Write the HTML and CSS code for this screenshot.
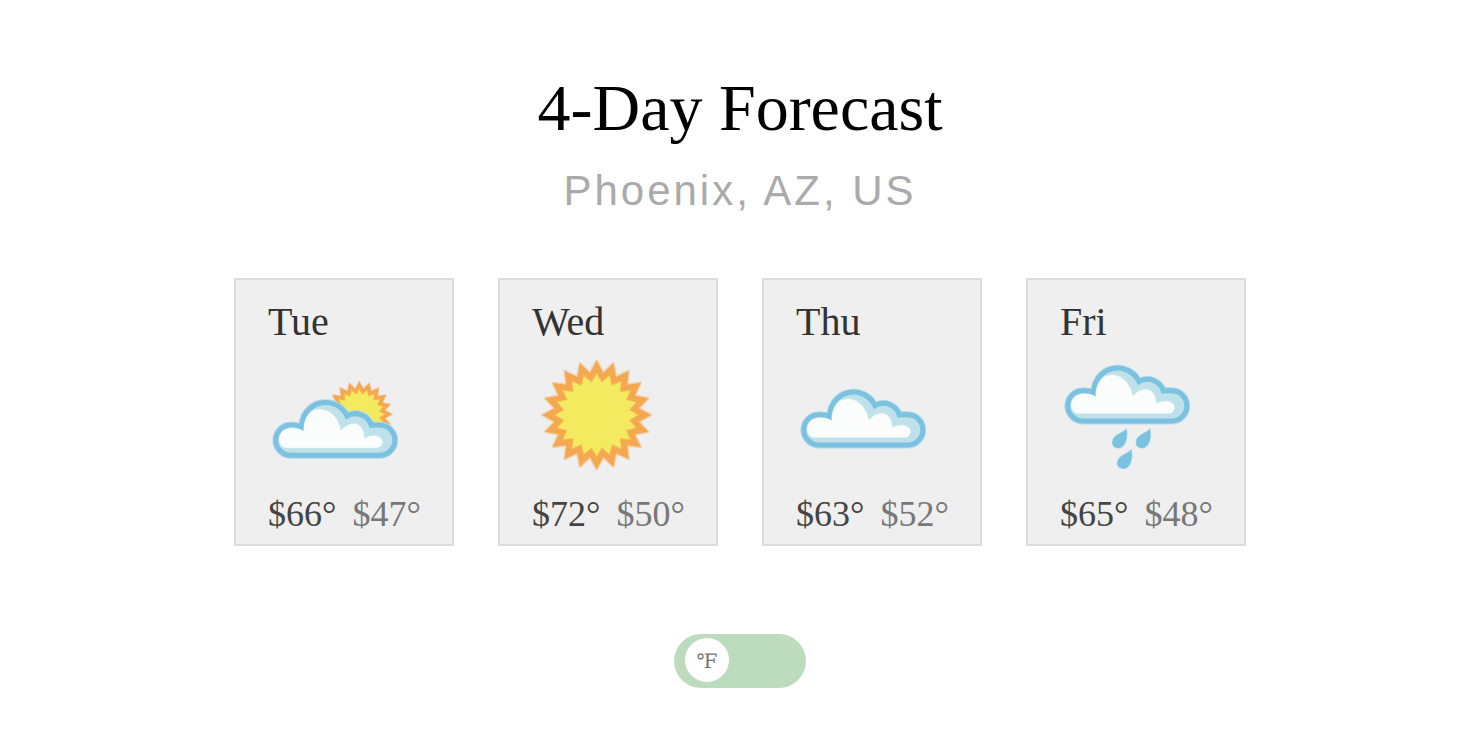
FILE: index.html
```html
<!DOCTYPE html>
<html lang="en">
<head>
<meta charset="utf-8">
<meta name="viewport" content="width=device-width, initial-scale=1">
<title>4-Day Forecast</title>
<link rel="stylesheet" href="styles.css">
</head>
<body>
<svg class="sprite" aria-hidden="true">
  <defs>
    <g id="sun">
      <polygon class="sun-rays" points="0,-163 20,-126 50,-155 58,-114 96,-132 91,-91 132,-96 114,-58 155,-50 126,-20 163,0 126,20 155,50 114,58 132,96 91,91 96,132 58,114 50,155 20,126 0,163 -20,126 -50,155 -58,114 -96,132 -91,91 -132,96 -114,58 -155,50 -126,20 -163,0 -126,-20 -155,-50 -114,-58 -132,-96 -91,-91 -96,-132 -58,-114 -50,-155 -20,-126"/>
      <polygon class="sun-core" points="0,-122 15,-97 38,-116 45,-87 72,-99 69,-69 99,-72 87,-45 116,-38 97,-15 122,0 97,15 116,38 87,45 99,72 69,69 72,99 45,87 38,116 15,97 0,122 -15,97 -38,116 -45,87 -72,99 -69,69 -99,72 -87,45 -116,38 -97,15 -122,0 -97,-15 -116,-38 -87,-45 -99,-72 -69,-69 -72,-99 -45,-87 -38,-116 -15,-97"/>
    </g>
    <path id="cloud-shape" d="M183 525A45 45 0 0 1 183 434Q202 433 216 442A71 71 0 0 1 351 407A50 50 0 0 1 424 435Q436 433 449 434A45 45 0 0 1 449 525Z"/>
    <g id="cloud">
      <use href="#cloud-shape" class="cloud-halo"/>
      <use href="#cloud-shape" class="cloud-body"/>
      <path class="cloud-light" d="M168 502C142 498 144 462 162 450C180 440 206 442 222 453C220 420 236 387 270 387C304 390 326 416 332 452Q350 430 375 430Q402 436 402 475Q415 466 435 466Q457 470 457 485Q455 502 438 502Z"/>
    </g>
    <path id="drop" class="drop" d="M313 477C302 491 271 494 271 518C272 531 282 534 291 534C309 532 318 506 313 477Z"/>
  </defs>
</svg>
<main class="page">
  <h1 class="title">4-Day Forecast</h1>
  <p class="place">Phoenix, AZ, US</p>
  <section class="days" aria-label="Forecast">
    <article class="day">
      <h2 class="day-name">Tue</h2>
      <svg class="day-icon" viewBox="114 240 390 390" role="img" aria-label="Partly cloudy">
        <use href="#sun" transform="translate(388 433) scale(.605)"/>
        <use href="#cloud" transform="translate(0 31)"/>
      </svg>
      <p class="temps"><span class="high">$66°</span><span class="low">$47°</span></p>
    </article>
    <article class="day">
      <h2 class="day-name">Wed</h2>
      <svg class="day-icon" viewBox="114 240 390 390" role="img" aria-label="Sunny">
        <use href="#sun" transform="translate(308 435)"/>
      </svg>
      <p class="temps"><span class="high">$72°</span><span class="low">$50°</span></p>
    </article>
    <article class="day">
      <h2 class="day-name">Thu</h2>
      <svg class="day-icon" viewBox="114 240 390 390" role="img" aria-label="Cloudy">
        <use href="#cloud"/>
      </svg>
      <p class="temps"><span class="high">$63°</span><span class="low">$52°</span></p>
    </article>
    <article class="day">
      <h2 class="day-name">Fri</h2>
      <svg class="day-icon" viewBox="114 240 390 390" role="img" aria-label="Rain">
        <use href="#cloud" transform="translate(0 -72)"/>
        <use href="#drop"/>
        <use href="#drop" transform="translate(71 0)"/>
        <use href="#drop" transform="translate(15 62)"/>
      </svg>
      <p class="temps"><span class="high">$65°</span><span class="low">$48°</span></p>
    </article>
  </section>
  <label class="toggle">
    <input class="toggle-input" type="checkbox" role="switch" aria-label="Show degrees Celsius">
    <span class="toggle-knob">℉</span>
  </label>
</main>
</body>
</html>
```
FILE: styles.css
```css
* {
  box-sizing: border-box;
}

body {
  margin: 0;
  background: #fff;
  color: #000;
  font-family: "Liberation Serif", "Times New Roman", serif;
}

.sprite {
  display: block;
  width: 0;
  height: 0;
}

.page {
  display: flex;
  flex-direction: column;
  align-items: center;
  padding: 68px 4px 40px 0;
}

.title {
  margin: 0;
  font-size: 66px;
  font-weight: 400;
  line-height: 80px;
}

.place {
  margin: 17px 0 0;
  color: #aaa;
  font-family: "Liberation Sans Narrow", "Arial Narrow", "Liberation Sans", sans-serif;
  font-size: 42px;
  line-height: 52px;
  letter-spacing: 3px;
}

.days {
  display: flex;
  flex-wrap: wrap;
  justify-content: center;
  gap: 44px;
  margin-top: 61px;
}

.day {
  min-width: 220px;
  padding: 20px 28px 8px 32px;
  border: 2px solid #dcdcdc;
  background: #efefef;
}

.day-name {
  margin: 0;
  color: #333;
  font-size: 40px;
  font-weight: 400;
  line-height: 44px;
}

.day-icon {
  display: block;
  width: 130px;
  height: 130px;
  margin: 6px 0 12px;
}

.temps {
  display: flex;
  gap: 16px;
  margin: 0;
  font-size: 36px;
  line-height: 44px;
}

.high {
  color: #444;
}

.low {
  color: #777;
}

.sun-rays {
  fill: #f4a850;
  stroke: #f4a850;
  stroke-opacity: .4;
  stroke-width: 8;
  stroke-linejoin: round;
}

.sun-core {
  fill: #f4ea60;
  stroke: #f4ea60;
  stroke-opacity: .4;
  stroke-width: 6;
}

.cloud-halo {
  fill: none;
  stroke: #b4dcea;
  stroke-width: 21;
}

.cloud-body {
  fill: #bfe2ea;
  stroke: #7ac2e0;
  stroke-width: 15;
}

.cloud-light {
  fill: #fbfdfd;
  stroke: #fbfdfd;
  stroke-opacity: .4;
  stroke-width: 4;
}

.drop {
  fill: #7ac2e0;
  stroke: #7ac2e0;
  stroke-opacity: .4;
  stroke-width: 4;
}

.toggle {
  display: flex;
  width: 132px;
  height: 54px;
  margin-top: 88px;
  padding: 4px 11px;
  border-radius: 27px;
  background: #bddbbd;
  cursor: pointer;
}

.toggle-input {
  position: absolute;
  opacity: 0;
  margin: 0;
}

.toggle-knob {
  width: 44px;
  height: 44px;
  border-radius: 50%;
  background: #fff;
  color: #777;
  font-family: "DejaVu Serif", serif;
  font-size: 20px;
  line-height: 46px;
  text-align: center;
}

.toggle-input:checked + .toggle-knob {
  margin-left: auto;
}

.toggle-input:focus-visible + .toggle-knob {
  outline: 2px solid #5a8f5a;
}
```
